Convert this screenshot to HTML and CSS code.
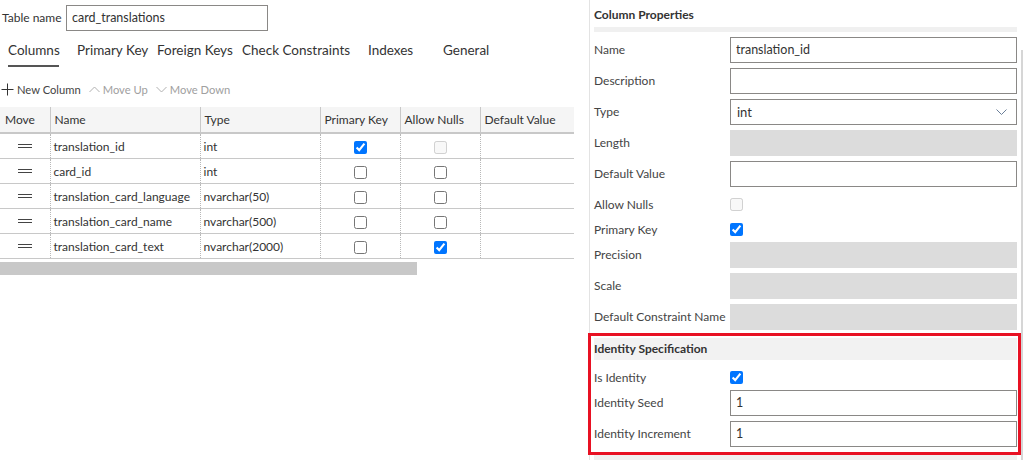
FILE: index.html
```html
<!DOCTYPE html>
<html>
<head>
<meta charset="utf-8" />
<title>Table Designer</title>
<link rel="stylesheet" href="styles.css">
</head>
<body>
<div class="designer">

	<!-- left side: table name, tabs and the columns grid -->
	<div class="left">
		<div class="table-name">
			<label>Table name</label>
			<input class="text-box name-box" type="text" value="card_translations" />
		</div>

		<div class="tabs">
			<span class="tab tab-columns active">Columns</span>
			<span class="tab tab-pk">Primary Key</span>
			<span class="tab tab-fk">Foreign Keys</span>
			<span class="tab tab-check">Check Constraints</span>
			<span class="tab tab-index">Indexes</span>
			<span class="tab">General</span>
		</div>

		<div class="toolbar">
			<span class="tool">
				<svg width="13" height="13" viewBox="0 0 13 13"><path d="M6.5 0.5v12M0.5 6.5h12" stroke="#333" stroke-width="1" fill="none"/></svg>
				New Column
			</span>
			<span class="tool disabled">
				<svg width="11" height="7" viewBox="0 0 11 7"><path d="M0.5 6L5.5 1L10.5 6" stroke="#b0b0b0" stroke-width="1" fill="none"/></svg>
				Move Up
			</span>
			<span class="tool disabled">
				<svg width="11" height="7" viewBox="0 0 11 7"><path d="M0.5 1L5.5 6L10.5 1" stroke="#b0b0b0" stroke-width="1" fill="none"/></svg>
				Move Down
			</span>
		</div>

		<table class="grid">
			<colgroup>
				<col class="c-move" />
				<col class="c-name" />
				<col class="c-type" />
				<col class="c-pk" />
				<col class="c-null" />
				<col />
			</colgroup>
			<thead>
				<tr>
					<th>Move</th>
					<th>Name</th>
					<th>Type</th>
					<th>Primary Key</th>
					<th>Allow Nulls</th>
					<th>Default Value</th>
				</tr>
			</thead>
			<tbody>
				<tr>
					<td class="handle"><span class="grip"></span></td>
					<td>translation_id</td>
					<td>int</td>
					<td class="center"><input type="checkbox" checked /></td>
					<td class="center"><input type="checkbox" disabled /></td>
					<td></td>
				</tr>
				<tr>
					<td class="handle"><span class="grip"></span></td>
					<td>card_id</td>
					<td>int</td>
					<td class="center"><input type="checkbox" /></td>
					<td class="center"><input type="checkbox" /></td>
					<td></td>
				</tr>
				<tr>
					<td class="handle"><span class="grip"></span></td>
					<td>translation_card_language</td>
					<td>nvarchar(50)</td>
					<td class="center"><input type="checkbox" /></td>
					<td class="center"><input type="checkbox" /></td>
					<td></td>
				</tr>
				<tr>
					<td class="handle"><span class="grip"></span></td>
					<td>translation_card_name</td>
					<td>nvarchar(500)</td>
					<td class="center"><input type="checkbox" /></td>
					<td class="center"><input type="checkbox" /></td>
					<td></td>
				</tr>
				<tr>
					<td class="handle"><span class="grip"></span></td>
					<td>translation_card_text</td>
					<td>nvarchar(2000)</td>
					<td class="center"><input type="checkbox" /></td>
					<td class="center"><input type="checkbox" checked /></td>
					<td></td>
				</tr>
			</tbody>
		</table>
		<div class="hscroll"><div class="thumb"></div></div>
	</div>

	<!-- right side: properties of the selected column -->
	<div class="right">
		<div class="props">
			<div class="section-title">Column Properties</div>
			<div class="section-bar"></div>

			<div class="row"><label>Name</label><input class="text-box" type="text" value="translation_id" /></div>
			<div class="row"><label>Description</label><input class="text-box" type="text" value="" /></div>
			<div class="row">
				<label>Type</label>
				<div class="select">
					<span>int</span>
					<svg width="11" height="6" viewBox="0 0 11 6"><path d="M0.5 0.5L5.5 5.5L10.5 0.5" stroke="#6b7f99" stroke-width="1" fill="none"/></svg>
				</div>
			</div>
			<div class="row"><label>Length</label><div class="off-box"></div></div>
			<div class="row"><label>Default Value</label><input class="text-box" type="text" value="" /></div>
			<div class="row check"><label>Allow Nulls</label><input type="checkbox" disabled /></div>
			<div class="row check"><label>Primary Key</label><input type="checkbox" checked /></div>
			<div class="row"><label>Precision</label><div class="off-box"></div></div>
			<div class="row"><label>Scale</label><div class="off-box"></div></div>
			<div class="row"><label>Default Constraint Name</label><div class="off-box"></div></div>

			<div class="identity">
				<div class="section-head">Identity Specification</div>
				<div class="row check first"><label>Is Identity</label><input type="checkbox" checked /></div>
				<div class="row"><label>Identity Seed</label><input class="text-box" type="text" value="1" /></div>
				<div class="row"><label>Identity Increment</label><input class="text-box" type="text" value="1" /></div>
			</div>
			<div class="section-bar next"></div>

			<div class="highlight"></div>
		</div>
		<div class="vscroll"></div>
	</div>

</div>
</body>
</html>
```

FILE: styles.css
```css
body{margin:0;padding:0;font-family:Lato,"Noto Sans",sans-serif;color:#333;background:#fff;}
input{font-family:inherit;}
.designer{display:flex;width:1023px;height:460px;overflow:hidden;}

/* left */
.left{width:589px;flex:none;}
.table-name{display:flex;align-items:center;height:25px;padding:5px 0 0 2px;font-size:12px;}
.table-name label{width:64px;white-space:nowrap;}
.text-box{box-sizing:border-box;height:26px;border:1px solid #8a8886;border-radius:0;padding:0 0 0 5px;font-size:12.5px;color:#333;outline:none;background:#fff;}
.name-box{width:202px;}

.tabs{display:flex;padding:12px 0 0 8px;height:30px;font-size:13.5px;color:#333;}
.tab{flex:none;}
.tab-columns{width:69px;}
.tab-pk{width:80px;}
.tab-fk{width:85px;}
.tab-check{width:126px;}
.tab-index{width:75px;}
.tab.active{position:relative;}
.tab.active::after{content:"";position:absolute;left:0;top:23px;width:51px;height:2px;background:#555;}

.toolbar{display:flex;align-items:center;height:20px;padding:0 0 0 1px;margin-top:7px;font-size:11.2px;}
.tool{display:flex;align-items:center;gap:3px;margin-right:8px;color:#444;}
.tool.disabled{color:#a0a0a0;}
.tool svg{display:block;}

.grid{border-collapse:collapse;width:574px;margin-top:8px;font-size:12px;table-layout:fixed;}
.grid th{height:25px;padding:0 0 0 4px;background:#f5f5f5;font-weight:normal;text-align:left;border-left:1px solid #c8c8c8;border-bottom:2px solid #c8c8c8;color:#333;}
.grid th:first-child{border-left:none;padding-left:5px;}
.grid td{height:24px;padding:0 0 0 3px;border-left:1px dotted #b8b8b8;border-bottom:1px solid #c8c8c8;white-space:nowrap;color:#333;}
.grid td:first-child{border-left:none;}
.c-move{width:50px;}
.c-name{width:150px;}
.c-type{width:120px;}
.c-pk{width:80px;}
.c-null{width:80px;}
.grid td.center{text-align:center;padding:0;}
.grid td.center input{margin:3px 0 0 0;vertical-align:middle;}
.grid td.handle{padding:0;}
.grip{display:block;width:14px;height:2px;margin:0 0 1px 18px;border-top:1px solid #444;border-bottom:1px solid #444;}

.hscroll{width:574px;height:13px;margin-top:3px;}
.thumb{width:417px;height:13px;background:#c8c8c8;}

/* right */
.right{flex:1;display:flex;border-left:1px solid #e3e3e3;}
.props{position:relative;width:423px;padding-left:4px;font-size:12px;color:#444;}
.vscroll{width:2px;margin:50px 0 0 4px;background:#d6d6d6;}
.section-title{height:24px;padding-top:3px;line-height:24px;font-weight:bold;color:#333;}
.section-bar{height:5px;background:#f0f0f0;margin-bottom:5px;}
.row{display:flex;align-items:center;height:25px;margin-bottom:6px;}
.row label{width:136px;flex:none;white-space:nowrap;}
.row .text-box{width:287px;}
.row.check{margin-bottom:0;}
.row.check input{margin:0;}
.select{box-sizing:border-box;width:287px;height:26px;border:1px solid #8a8886;display:flex;align-items:center;justify-content:space-between;padding:0 9px 0 6px;color:#333;font-size:13px;}
.off-box{width:287px;height:26px;background:#dcdcdc;}
.identity{margin-top:9px;}
.section-head{height:22px;line-height:22px;font-weight:bold;background:#f2f2f2;color:#333;}
.row.first{margin-top:5px;}
.section-bar.next{margin-top:9px;}
.highlight{position:absolute;left:-2px;top:333px;width:427px;height:116px;border:3px solid #e81123;}
```
